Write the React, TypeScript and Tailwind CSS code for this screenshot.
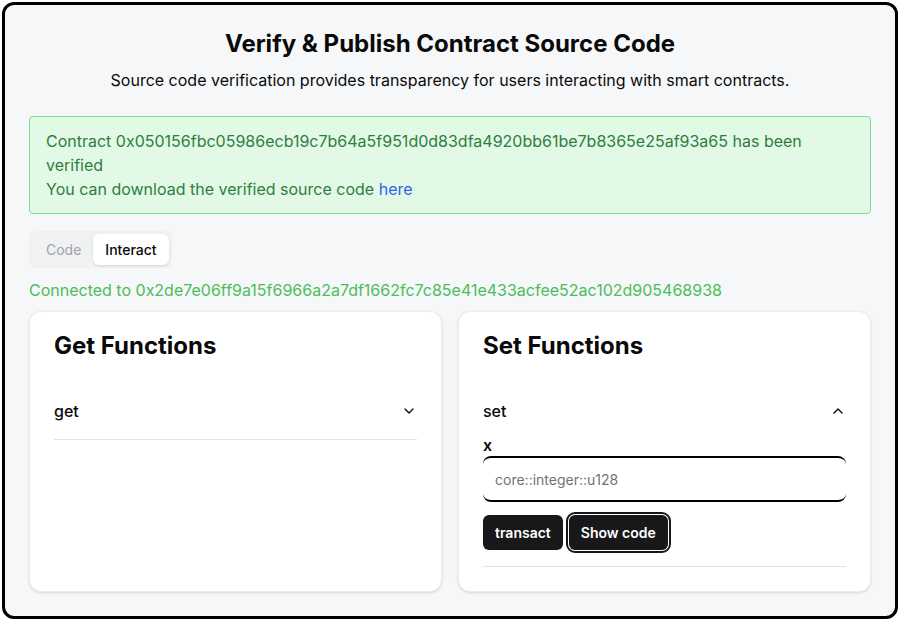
import { useState } from 'react';
import { ChevronDown, ChevronUp } from 'lucide-react';

const CONTRACT = '0x050156fbc05986ecb19c7b64a5f951d0d83dfa4920bb61be7b8365e25af93a65';
const ACCOUNT = '0x2de7e06ff9a15f6966a2a7df1662fc7c85e41e433acfee52ac102d905468938';

function GetCard() {
	return (
		<div className="flex flex-col rounded-xl border border-[#ececef] bg-white px-6 pt-[18px] pb-6 shadow-sm">
			<h2 className="text-2xl leading-8 font-bold text-[#0a0a0a]">Get Functions</h2>
			<div className="mt-[21px] flex items-center justify-between border-b border-[#e4e4e7] py-4 text-base leading-6 font-medium text-[#0a0a0a]">
				<span>get</span>
				<ChevronDown size={16} strokeWidth={2} />
			</div>
		</div>
	);
}

function SetCard() {
	const [value, setValue] = useState('');

	return (
		<div className="flex flex-col rounded-xl border border-[#ececef] bg-white px-6 pt-[18px] pb-6 shadow-sm">
			<h2 className="text-2xl leading-8 font-bold text-[#0a0a0a]">Set Functions</h2>
			<div className="mt-[21px] border-b border-[#e4e4e7] pb-4">
				<div className="flex items-center justify-between pt-4 pb-[14px] text-base leading-6 font-medium text-[#0a0a0a]">
					<span>set</span>
					<ChevronUp size={16} strokeWidth={2} />
				</div>
				<label className="block text-base leading-4 font-semibold text-[#0a0a0a]">x</label>
				<input
					value={value}
					onChange={(e) => setValue(e.target.value)}
					placeholder="core::integer::u128"
					className="mt-[3px] h-[46px] w-full rounded-lg border-y-2 border-black bg-white px-3 text-sm text-[#0a0a0a] outline-none placeholder:text-[#71717a]"
				/>
				<div className="mt-[13px] flex items-center gap-[6px]">
					<button className="h-[35px] rounded-md bg-[#18181b] px-3 text-sm font-semibold text-white">
						transact
					</button>
					<button className="h-[35px] rounded-md bg-[#18181b] px-3 text-sm font-semibold text-white outline-2 outline-offset-1 outline-[#18181b]">
						Show code
					</button>
				</div>
			</div>
		</div>
	);
}

export default function App() {
	const [tab, setTab] = useState<'code' | 'interact'>('interact');

	return (
		<div className="h-[622px] w-[900px] bg-white p-[2px] pb-[3px] font-['Inter',sans-serif]">
			<div className="flex h-full flex-col rounded-[12px] border-[3px] border-black bg-[#f6f7f9] px-6 pt-[23px]">
				<h1 className="text-center text-2xl leading-8 font-bold text-[#0a0a0a]">
					Verify &amp; Publish Contract Source Code
				</h1>
				<p className="mt-2 text-center text-base leading-6 text-[#0a0a0a]">
					Source code verification provides transparency for users interacting with smart contracts.
				</p>

				<div className="mt-6 rounded border border-[#7fdc8e] bg-[#e2f9e6] px-4 py-3 text-base leading-6 text-[#2f7d3f]">
					<div>
						Contract {CONTRACT} has been verified
					</div>
					<div>
						You can download the verified source code{' '}
						<a href="#" className="text-[#2f62ef]">
							here
						</a>
					</div>
				</div>

				<div className="mt-[17px] flex h-[37px] w-fit items-center rounded-md bg-[#f0f1f3] p-[3px] text-sm">
					<button
						onClick={() => setTab('code')}
						className={
							tab === 'code'
								? 'h-full rounded-md bg-white px-3 font-medium text-[#0a0a0a] shadow-sm'
								: 'h-full rounded-md pr-[12px] pl-[14px] font-normal text-[#a1a2a7]'
						}
					>
						Code
					</button>
					<button
						onClick={() => setTab('interact')}
						className={
							tab === 'interact'
								? 'h-full rounded-md bg-white px-3 font-medium text-[#0a0a0a] shadow-sm'
								: 'h-full rounded-md px-3 font-normal text-[#a1a2a7]'
						}
					>
						Interact
					</button>
				</div>

				<p className="mt-[10px] text-base leading-6 text-[#4bbd5b]">Connected to {ACCOUNT}</p>

				<div className="mt-[9px] grid grid-cols-2 gap-4">
					<GetCard />
					<SetCard />
				</div>
			</div>
		</div>
	);
}
